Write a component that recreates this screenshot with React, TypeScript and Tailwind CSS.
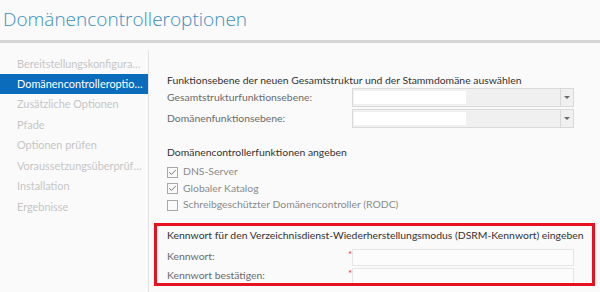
import { Check } from 'lucide-react'

const STEPS = [
  'Bereitstellungskonfiguration',
  'Domänencontrolleroptionen',
  'Zusätzliche Optionen',
  'Pfade',
  'Optionen prüfen',
  'Voraussetzungsüberprüfung',
  'Installation',
  'Ergebnisse',
]

const ACTIVE = 1

function Dropdown() {
  return (
    <div className="flex h-[19px] w-[222px] border border-[#d9d9d9] bg-[#f0f0f0]">
      <div className="flex-1 py-[2px] pl-px">
        <div className="h-full w-[112px] bg-white" />
      </div>
      <div className="flex w-[13px] items-center justify-center border-l border-[#d9d9d9]">
        <svg width="6" height="3" viewBox="0 0 6 3">
          <path d="M0 0h6L3 3z" fill="#6a6a6a" />
        </svg>
      </div>
    </div>
  )
}

function Box({ checked }: { checked: boolean }) {
  return (
    <span className="flex size-[11px] shrink-0 items-center justify-center border border-[#a8a8a8] bg-[#fafafa]">
      {checked && <Check className="size-[9px] text-[#707070]" strokeWidth={2.6} />}
    </span>
  )
}

export default function App() {
  return (
    <div
      className="h-[292px] w-[600px] overflow-hidden bg-[#fafafa] text-[10.4px]"
      style={{ fontFamily: 'Lato, "Open Sans", sans-serif' }}
    >
      <header className="h-[43px] border-b-[3px] border-[#d4d4d4] pl-[3px] pt-[6px]">
        <h1
          className="text-[19px] font-light leading-[26px] text-[#3a8fc0]"
          style={{ fontFamily: '"Open Sans", sans-serif' }}
        >
          Domänencontrolleroptionen
        </h1>
      </header>

      <div className="flex">
        <nav className="mt-[7px] h-[250px] w-[149px] border-r border-[#e1e1e1] pt-[4px] text-[10.9px]">
          {STEPS.map((step, i) => (
            <div
              key={step}
              className={`truncate pl-[17px] pr-[5px] ${
                i === ACTIVE
                  ? 'h-[20px] bg-[#0c6cbc] leading-[19px] text-white'
                  : i === 0
                    ? 'h-[20px] leading-[20px] text-[#c6c6c6]'
                    : 'h-[20.6px] leading-[20px] text-[#c6c6c6]'
              }`}
            >
              {step}
            </div>
          ))}
        </nav>

        <main className="flex-1 pl-[5px] pr-[7px] pt-[30px] text-[#333]">
          <section className="pl-[13px]">
            <h2 className="leading-[15px]">Funktionsebene der neuen Gesamtstruktur und der Stammdomäne auswählen</h2>
            <div className="flex flex-col gap-[2px]">
              <div className="flex items-center">
                <span className="w-[185px] text-[#6a6a6a]">Gesamtstrukturfunktionsebene:</span>
                <Dropdown />
              </div>
              <div className="flex items-center">
                <span className="w-[185px] text-[#6a6a6a]">Domänenfunktionsebene:</span>
                <Dropdown />
              </div>
            </div>
          </section>

          <section className="mt-[16px] pl-[13px]">
            <h2 className="leading-[16px]">Domänencontrollerfunktionen angeben</h2>
            <div className="mt-[4px] flex flex-col text-[#8a8a8a]">
              {[
                ['DNS-Server', true],
                ['Globaler Katalog', true],
                ['Schreibgeschützter Domänencontroller (RODC)', false],
              ].map(([label, checked]) => (
                <label key={label as string} className="flex h-[16.5px] items-center gap-[5px]">
                  <Box checked={checked as boolean} />
                  {label}
                </label>
              ))}
            </div>
          </section>

          <section className="mt-[9px] h-[63px] overflow-hidden border-[3px] border-[#e8111f] pl-[10px] pr-[8px] pt-px">
            <h2 className="whitespace-nowrap leading-[16px]">
              Kennwort für den Verzeichnisdienst-Wiederherstellungsmodus (DSRM-Kennwort) eingeben
            </h2>
            <div className="mt-[6px] flex flex-col gap-[2px] text-[#6a6a6a]">
              {['Kennwort:', 'Kennwort bestätigen:'].map((label) => (
                <div key={label} className="flex items-center">
                  <span className="w-[181px]">{label}</span>
                  <span className="w-[4px] self-start text-[10px] leading-[10px] text-[#e23b3b]">*</span>
                  <div className="h-[17px] w-[222px] border border-[#e6e6e6] bg-[#fcfcfc]" />
                </div>
              ))}
            </div>
          </section>
        </main>
      </div>
    </div>
  )
}
